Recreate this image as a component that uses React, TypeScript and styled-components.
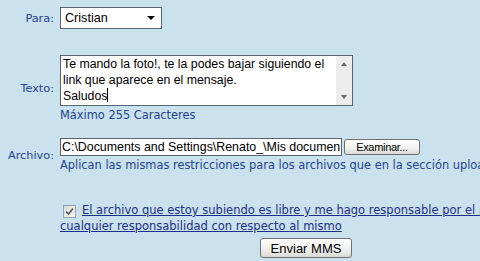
import React from 'react';
import styled, { createGlobalStyle } from 'styled-components';

const Global = createGlobalStyle`
  html, body { margin: 0; padding: 0; background: #cae1ee; overflow: hidden; }
`;

const Form = styled.div`
  width: 612px;
  padding-top: 7px;
  display: flex;
  flex-direction: column;
  font-family: "DejaVu Sans", Verdana, sans-serif;
`;

const Row = styled.div<{ $top: number }>`
  display: grid;
  grid-template-columns: 60px 1fr;
  margin-top: ${p => p.$top}px;
`;

const Label = styled.div`
  align-self: center;
  justify-self: end;
  padding-right: 6px;
  font-size: 11.3px;
  color: #24448f;
`;

const Field = styled.div`
  display: flex;
  flex-direction: column;
  align-items: flex-start;
`;

const Select = styled.div`
  box-sizing: border-box;
  width: 102px;
  height: 22px;
  border: 1px solid #5a6470;
  background: #fff;
  display: flex;
  align-items: center;
  justify-content: space-between;
  padding: 0 6px 0 4px;
  font-family: "Liberation Sans", Arial, sans-serif;
  font-size: 12.6px;
  color: #000;
`;

const Arrow = styled.span`
  width: 0;
  height: 0;
  border-left: 4px solid transparent;
  border-right: 4px solid transparent;
  border-top: 4px solid #000;
`;

const TextBox = styled.div`
  box-sizing: border-box;
  width: 293px;
  height: 51px;
  border: 1px solid #5a6470;
  background: #fff;
  display: flex;
`;

const TextBody = styled.div`
  flex: 1;
  padding: 1px 2px;
  font-family: "Liberation Sans", Arial, sans-serif;
  font-size: 12.3px;
  line-height: 15.5px;
  color: #000;
  white-space: nowrap;
  overflow: hidden;
`;

const Caret = styled.span`
  display: inline-block;
  width: 1px;
  height: 14px;
  background: #000;
  vertical-align: -2px;
`;

const Scroll = styled.div`
  width: 16px;
  background: #ededed;
  display: flex;
  flex-direction: column;
  justify-content: space-between;
  align-items: center;
  padding: 6px 0 6px;
  box-sizing: border-box;
`;

const Tri = styled.span<{ $up?: boolean }>`
  width: 0;
  height: 0;
  border-left: 3.5px solid transparent;
  border-right: 3.5px solid transparent;
  ${p => (p.$up ? 'border-bottom: 4px solid #6b6b6b;' : 'border-top: 4px solid #6b6b6b;')}
`;

const Hint = styled.div`
  font-size: 11.4px;
  line-height: 14px;
  margin-top: 2px;
  color: #24448f;
  white-space: nowrap;
`;

const FileLine = styled.div`
  display: flex;
  align-items: center;
  gap: 2px;
`;

const FilePath = styled.div`
  box-sizing: border-box;
  width: 282px;
  height: 18px;
  border: 1px solid #5a6470;
  background: #fff;
  padding: 0 1px;
  font-family: "Liberation Sans", Arial, sans-serif;
  font-size: 12.4px;
  line-height: 16px;
  white-space: nowrap;
  overflow: hidden;
`;

const Button = styled.button<{ $w: number; $h: number; $fs: number }>`
  box-sizing: border-box;
  width: ${p => p.$w}px;
  height: ${p => p.$h}px;
  border: 1px solid #707070;
  border-radius: 3px;
  background: linear-gradient(#ffffff, #f0f0ee 60%, #d9d9d4);
  font-family: "Liberation Sans", Arial, sans-serif;
  font-size: ${p => p.$fs}px;
  color: #000;
  padding: 0;
  letter-spacing: ${p => (p.$fs < 12 ? '-0.3px' : '0')};
`;

const Consent = styled.div`
  margin-left: 60px;
  margin-top: 30px;
  font-size: 11.5px;
  line-height: 16px;
  color: #1b2f86;
  white-space: nowrap;
`;

const Check = styled.span`
  display: inline-flex;
  box-sizing: border-box;
  width: 13px;
  height: 13px;
  margin: 0 6px 0 3px;
  border: 1px solid #8fa3b4;
  background: linear-gradient(135deg, #dcdcd6, #f4f4f0);
  vertical-align: -2px;
  align-items: center;
  justify-content: center;
`;

const Link = styled.span`
  text-decoration: underline;
`;

const Submit = styled.div`
  display: flex;
  justify-content: center;
  margin-top: 4px;
`;

const Rule = styled.div`
  margin-top: 5px;
  height: 2px;
  width: 612px;
  border-top: 1px solid #4aa3d8;
  background: #8ccbef;
`;

export default function App() {
  return (
    <>
      <Global />
      <Form>
        <Row $top={0}>
          <Label>Para:</Label>
          <Field>
            <Select>
              <span>Cristian</span>
              <Arrow />
            </Select>
          </Field>
        </Row>
        <Row $top={26}>
          <Label>Texto:</Label>
          <Field>
            <TextBox>
              <TextBody>
                Te mando la foto!, te la podes bajar siguiendo el
                <br />
                link que aparece en el mensaje.
                <br />
                Saludos<Caret />
              </TextBody>
              <Scroll>
                <Tri $up />
                <Tri />
              </Scroll>
            </TextBox>
            <Hint>Máximo 255 Caracteres</Hint>
          </Field>
        </Row>
        <Row $top={16}>
          <Label>Archivo:</Label>
          <Field>
            <FileLine>
              <FilePath>C:\Documents and Settings\Renato_\Mis documen</FilePath>
              <Button $w={76} $h={16} $fs={11}>Examinar...</Button>
            </FileLine>
            <Hint>Aplican las mismas restricciones para los archivos que en la sección upload</Hint>
          </Field>
        </Row>
        <Consent>
          <Check>
            <svg width="9" height="9" viewBox="0 0 9 9">
              <path d="M1 4.5 L3.5 7 L8 1.5" fill="none" stroke="#4d5a66" strokeWidth="1.6" />
            </svg>
          </Check>
          <Link>El archivo que estoy subiendo es libre y me hago responsable por el mismo</Link>
          <br />
          <Link>cualquier responsabilidad con respecto al mismo</Link>
        </Consent>
        <Submit>
          <Button $w={92} $h={20} $fs={13}>Enviar MMS</Button>
        </Submit>
        <Rule />
      </Form>
    </>
  );
}
